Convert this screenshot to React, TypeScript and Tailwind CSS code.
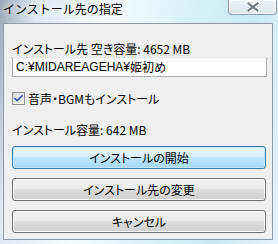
import { Check } from "lucide-react";

const FONT = "font-['Noto_Sans_CJK_JP','Noto_Sans',sans-serif]";

function WinButton({ label, focused }: { label: string; focused?: boolean }) {
  // Win7 style push button: glossy two-tone gradient
  const skin = focused
    ? "border-[#3c7fb1] bg-[linear-gradient(#eaf6fd_0%,#d9f0fc_45%,#bee6fd_50%,#a7d9f5_100%)] shadow-[inset_0_0_0_1px_#c4e5f6]"
    : "border-[#707070] bg-[linear-gradient(#f2f2f2_0%,#ebebeb_45%,#dddddd_50%,#cfcfcf_100%)] shadow-[inset_0_0_0_1px_#fcfcfc]";
  return (
    <button
      className={`h-[23px] w-[254px] rounded-[3px] border text-[12px] leading-none text-black [font-feature-settings:'palt'] ${skin}`}
    >
      {label}
    </button>
  );
}

export default function App() {
  return (
    <div
      className={`flex h-[244px] w-[278px] flex-col overflow-hidden bg-[linear-gradient(100deg,#9aa6b8_0%,#dfe9f2_12%,#f4fbfd_35%,#d7f3f8_60%,#c9e7f6_80%,#e6f6fb_100%)] ${FONT}`}
    >
      {/* title bar */}
      <div className="flex h-[23px] shrink-0 items-start justify-between">
        <div className="pl-[3px] pt-[1px] text-[12px] leading-[16px] text-black [text-shadow:0_0_6px_#fff,0_0_6px_#fff]">
          インストール先の指定
        </div>
        <div className="mr-[1px] flex h-[15px] w-[49px] items-center justify-center rounded-b-[4px] border border-t-0 border-[#8c98a4] bg-[linear-gradient(#eef4f8,#dbe6ee)] shadow-[inset_0_0_0_1px_rgba(255,255,255,0.7)]">
          <svg width="12" height="10" viewBox="0 0 12 10">
            <path
              d="M1.5 1.5 L10.5 8.5 M10.5 1.5 L1.5 8.5"
              stroke="#fff"
              strokeWidth="4"
              strokeLinecap="round"
            />
            <path
              d="M1.5 1.5 L10.5 8.5 M10.5 1.5 L1.5 8.5"
              stroke="#6c7680"
              strokeWidth="2"
              strokeLinecap="square"
            />
          </svg>
        </div>
      </div>

      {/* client area */}
      <div className="ml-[3px] flex h-[217px] w-[270px] flex-col border border-[#8e9aa8] bg-[#f0f0f0] pl-[8px] text-[12px] leading-none text-black [font-feature-settings:'palt']">
        <div className="mt-[19px]">インストール先 空き容量: 4652 MB</div>
        <div className="mt-[2px] flex h-[20px] w-[255px] items-center border border-[#abadb3] border-t-[#e3e9ef] bg-white pl-[3px]">
          <span className="font-['Liberation_Sans',sans-serif] text-[12px]">C:¥MIDAREAGEHA¥</span>
          姫初め
        </div>
        <label className="mt-[15px] flex items-center gap-[3px]">
          <span className="flex h-[13px] w-[13px] items-center justify-center border border-[#8e8f8f] bg-[linear-gradient(135deg,#dcdcdc,#fafafa)]">
            <Check size={11} strokeWidth={3.5} className="text-[#2a48a6]" />
          </span>
          音声・BGMもインストール
        </label>
        <div className="mt-[19px]">インストール容量: 642 MB</div>
        <div className="mt-[10px] flex flex-col gap-[9px]">
          <WinButton label="インストールの開始" focused />
          <WinButton label="インストール先の変更" />
          <WinButton label="キャンセル" />
        </div>
      </div>
    </div>
  );
}
